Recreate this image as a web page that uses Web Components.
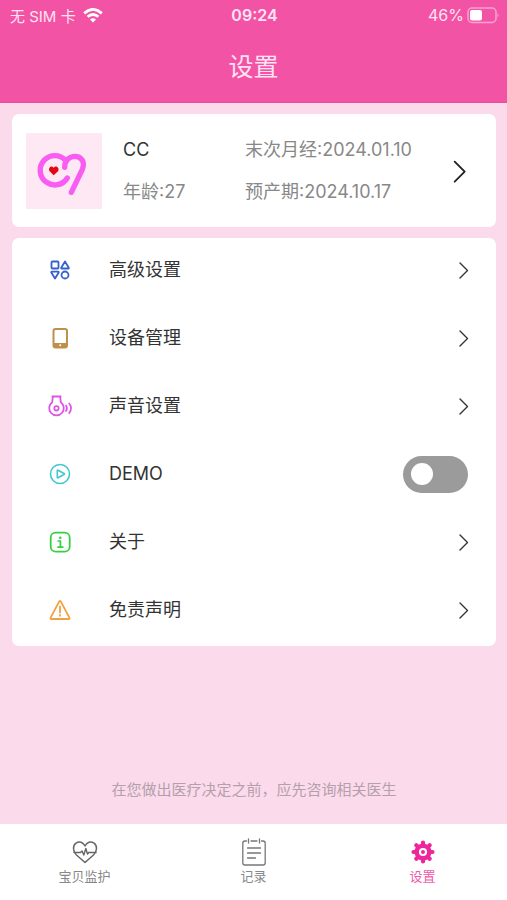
<!DOCTYPE html>
<html lang="zh-CN">
<head>
<meta charset="utf-8">
<meta name="viewport" content="width=device-width, initial-scale=1">
<title>设置</title>
<style>
  body { margin: 0; font-family: Inter, "Noto Sans CJK SC", sans-serif; color: #333; }
</style>
</head>
<body>
<settings-app></settings-app>
<script>
const define = (name, html, setup) => customElements.define(name, class extends HTMLElement {
  constructor() {
    super();
    this.attachShadow({ mode: 'open' }).innerHTML = html;
  }
  connectedCallback() { if (setup) setup(this, this.shadowRoot); }
});

const icons = {
  grid: '<g stroke="#3561cf" stroke-width="1.8"><rect x="3.5" y="3.5" width="7" height="7" rx="1"/><path d="M17 3.5l3.8 6.3q.3.7-.5.7h-6.6q-.8 0-.5-.7z"/><path d="M7 20.5l-3.7-6q-.3-.8.5-.8h6.400q.8 0 .5.8z"/><circle cx="17" cy="17" r="3.5"/></g>',
  phone: '<rect x="5.5" y="3" width="13.5" height="18.5" rx="2" stroke="#bd914b" stroke-width="2"/><path d="M5.5 17H19v3q0 1.5-2 1.5H7.5q-2 0-2-1.5z" fill="#bd914b"/><circle cx="12.2" cy="19.2" r="1" fill="#fff"/>',
  sound: '<g stroke="#dd55e5" stroke-width="1.8"><path d="M4.300 2.500h8.400M4.800 3l-.6 5.200A7.300 7.300 0 1 0 12.800 8.200L12.200 3"/><circle cx="8.500" cy="14.300" r="2.200"/><path d="M18 11.500q2 2.800 0 5.600M21.200 9.500q3.800 4.800 0 9.600" stroke-width="1.700"/></g>',
  play: '<g stroke="#43c6d0" stroke-width="1.6"><circle cx="12" cy="12" r="9.5"/><path d="M9.300 8.600q0-.8.7-.4l6 3.300q.8.500 0 1l-6 3.300q-.7.400-.7-.4z"/></g>',
  info: '<rect x="2.700" y="2.700" width="19" height="19" rx="5" stroke="#35cf43" stroke-width="1.800"/><circle cx="12.200" cy="7.800" r="1.300" fill="#35cf43"/><path d="M10.200 11h2.200v6M10 17.200h4.800" stroke="#35cf43" stroke-width="1.700"/>',
  warning: '<g stroke="#f3a03e" stroke-width="1.8"><path d="M11.300 3.400q.7-1 1.400 0l8.700 16.200q.5 1.400-.9 1.400h-17q-1.400 0-.9-1.400z"/><path d="M12 8.500v6M12 17v.8"/></g>',
  heart: '<g stroke="#666" stroke-width="1.5"><path d="M12 22.500L3.500 15C-.5 11-.3 5.500 3 3.200 6.500.8 10 2.300 12 6c2-3.700 5.500-5.200 9-2.800 3.300 2.300 3.500 7.800-.5 11.800z"/><path d="M1 12.500h6.500l1.500-1.500 1.800 4 2-6.500 1.700 5.500 1.200-1.500H23" stroke-width="1.4"/></g>',
  record: '<g stroke="#777" stroke-width="1.3"><path d="M4.500 1H3Q.8 1 .8 3.200v19.600Q.8 25 3 25h18q2.200 0 2.200-2.200V3.200Q23.200 1 21 1h-1.500M9 1h6M6.500-1v4M17.500-1v4M5.500 8h13M5.500 13h13M5.500 18h8"/></g>',
  gear: '<g stroke="#ed279b"><circle cx="12" cy="12" r="6.300" stroke-width="4.500"/><g stroke-width="4.200" stroke-linecap="round"><path d="M12 2.500v2M12 19.500v2M2.500 12h2M19.500 12h2M5.300 5.300l1.500 1.500M17.200 17.200l1.500 1.500M5.300 18.700l1.500-1.500M17.200 6.800l1.500-1.500"/></g></g><circle cx="12" cy="12" r="2" fill="#ed279b"/>',
  chevron: '<path d="M8 5l7.500 7.500L8 20" stroke="currentColor" stroke-width="1.4"/>'
};

define('ui-icon', `
  <style>
    :host { display: block; flex: none; width: 24px; height: 24px; }
    svg { display: block; width: 100%; height: 100%; overflow: visible; fill: none; stroke-linejoin: round; stroke-linecap: round; }
  </style>
  <svg viewBox="0 0 24 24" aria-hidden="true"></svg>`,
  (el, root) => { root.querySelector('svg').innerHTML = icons[el.getAttribute('name')] || ''; });

define('status-bar', `
  <style>
    :host { display: grid; grid-template-columns: 1fr auto 1fr; align-items: center; height: 30px; padding: 0 8px 0 10px; font-size: 16px; color: #ffe3f3; }
    .left, .right { display: flex; align-items: center; gap: 7px; font-size: 15px; }
    .right { justify-content: flex-end; gap: 3px; font-size: 16px; }
    time { font-weight: 600; }
    svg { display: block; flex: none; }
  </style>
  <div class="left"><span>无 SIM 卡</span>
    <svg width="20" height="15" viewBox="0 0 20 15" fill="none" stroke="#fff" stroke-width="2.8" aria-hidden="true">
      <path d="M1.200 5.400Q10-2.600 18.800 5.400M4.600 8.800q5.400-4.600 10.800 0"/><path d="M10 14.500l-3-3q3-2.400 6 0z" fill="#fff" stroke="none"/>
    </svg>
  </div>
  <time>09:24</time>
  <div class="right"><span>46%</span>
    <svg width="32" height="17" viewBox="0 0 32 17" aria-hidden="true">
      <rect x="1" y="1" width="28" height="14.5" rx="4" fill="none" stroke="#f9a2d0" stroke-width="1.5"/>
      <rect x="3" y="3" width="12" height="10.5" rx="2" fill="#fff"/><path d="M30.500 6q2 2.200 0 4.500z" fill="#f9a2d0"/>
    </svg>
  </div>`);

define('page-header', `
  <style>
    :host { display: block; background: #f353a4; border-bottom: 1px solid #e64c99; }
    h1 { margin: 0; padding: 19px 0 17px; font-size: 25px; line-height: 36px; font-weight: 400; text-align: center; color: #ffe3f3; }
  </style>
  <status-bar></status-bar>
  <h1><slot></slot></h1>`);

define('app-logo', `
  <style>
    :host { display: block; flex: none; width: 76px; height: 76px; background: #fee8f3; }
    svg { display: block; width: 100%; height: 100%; }
  </style>
  <svg viewBox="78 84 228 228" fill="none" role="img" aria-label="头像">
    <g stroke="#f95cf3" stroke-width="16" stroke-linecap="round" stroke-linejoin="round">
      <path d="M202 219A44 44 0 1 1 197 166"/>
      <path d="M194 187C194 166 209 154 225 154C245 154 256 172 247 193L214 262"/>
    </g>
    <path d="M161 211l-12-12c-6-8 4-20 12-11 8-9 19 2 13 11z" fill="#e30613"/>
  </svg>`);

define('profile-card', `
  <style>
    :host { display: block; }
    button { display: flex; align-items: center; width: 100%; min-height: 113px; padding: 0 20px 0 14px; border: 0; border-radius: 7px; background: #fff; font: inherit; font-size: 18px; line-height: 24px; color: #888; text-align: left; cursor: pointer; }
    .facts { flex: 1; display: grid; grid-template-columns: 122px auto; justify-content: start; row-gap: 18px; margin-left: 21px; white-space: nowrap; }
    .name { color: #333; }
    ui-icon { width: 32px; height: 32px; color: #222; }
  </style>
  <button type="button">
    <app-logo></app-logo>
    <span class="facts">
      <span class="name">CC</span><span>末次月经:2024.01.10</span>
      <span>年龄:27</span><span>预产期:2024.10.17</span>
    </span>
    <ui-icon name="chevron"></ui-icon>
  </button>`);

define('setting-row', `
  <style>
    :host { display: block; }
    .row { display: flex; align-items: center; gap: 37px; box-sizing: border-box; width: 100%; height: 68px; padding: 0 28px 4px 36px; border: 0; background: none; font: inherit; font-size: 18px; line-height: 26px; color: #333; text-align: left; cursor: pointer; }
    .text { flex: 1; }
    .end { margin-right: -8px; }
    input { appearance: none; flex: none; display: flex; align-items: center; width: 65px; height: 37px; margin: 0; padding: 0 8px; border-radius: 19px; background: #9b9b9b; cursor: pointer; }
    input::before { content: ""; width: 22px; height: 22px; border-radius: 50%; background: #fff; }
    input:checked { justify-content: flex-end; background: #f353a4; }
  </style>`,
  (el, root) => {
    const start = `<ui-icon name="${el.getAttribute('icon')}"></ui-icon><span class="text"><slot></slot></span>`;
    root.innerHTML += el.hasAttribute('toggle')
      ? `<label class="row">${start}<input type="checkbox" role="switch"></label>`
      : `<button class="row" type="button">${start}<ui-icon class="end" name="chevron"></ui-icon></button>`;
  });

define('settings-list', `
  <style>:host { display: block; border-radius: 7px; background: #fff; }</style>
  <slot></slot>`);

define('tab-item', `
  <style>
    :host { display: block; flex: 1; }
    a { display: flex; flex-direction: column; align-items: center; gap: 3px; padding-top: 16px; font-size: 13px; line-height: 18px; color: #888; text-decoration: none; }
    :host([active]) a { color: #f05aa8; }
  </style>`,
  (el, root) => {
    const current = el.hasAttribute('active') ? ' aria-current="page"' : '';
    root.innerHTML += `<a href="#"${current}><ui-icon name="${el.getAttribute('icon')}"></ui-icon><span><slot></slot></span></a>`;
  });

define('tab-bar', `
  <style>
    :host { display: block; background: #fff; }
    nav { display: flex; min-height: 76px; }
  </style>
  <nav><slot></slot></nav>`);

define('settings-app', `
  <style>
    :host { display: flex; flex-direction: column; min-height: 100vh; background: #fbdaec; }
    main { flex: 1; display: flex; flex-direction: column; gap: 11px; padding: 11px 11px 0 12px; }
    p { margin: auto 0 23px; font-size: 15px; line-height: 22px; text-align: center; color: #b59fab; }
  </style>
  <page-header>设置</page-header>
  <main>
    <profile-card></profile-card>
    <settings-list>
      <setting-row icon="grid">高级设置</setting-row>
      <setting-row icon="phone">设备管理</setting-row>
      <setting-row icon="sound">声音设置</setting-row>
      <setting-row icon="play" toggle>DEMO</setting-row>
      <setting-row icon="info">关于</setting-row>
      <setting-row icon="warning">免责声明</setting-row>
    </settings-list>
    <p>在您做出医疗决定之前，应先咨询相关医生</p>
  </main>
  <tab-bar>
    <tab-item icon="heart">宝贝监护</tab-item>
    <tab-item icon="record">记录</tab-item>
    <tab-item icon="gear" active>设置</tab-item>
  </tab-bar>`);
</script>
</body>
</html>
